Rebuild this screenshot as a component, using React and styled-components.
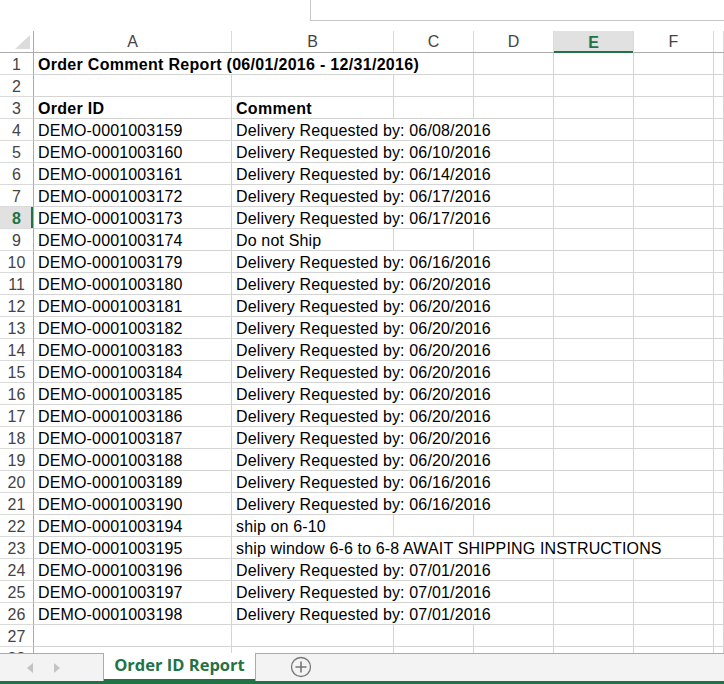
import React from 'react';
import styled, { createGlobalStyle } from 'styled-components';

const GlobalStyle = createGlobalStyle`
  html, body {
    margin: 0;
    padding: 0;
    background: #fff;
  }
  body {
    font-family: "Liberation Sans", Arial, sans-serif;
  }
`

const COLS = '34px 198px 162px 80px 80px 80px 80px 10px';

const Window = styled.div`
  width: 724px;
  height: 684px;
  display: flex;
  flex-direction: column;
  overflow: hidden;
  background: #fff;
`
const TopBar = styled.div`
  height: 31px;
  flex: none;
  display: flex;
`
const FormulaBox = styled.div`
  margin-left: 310px;
  flex: 1;
  height: 20px;
  border-left: 1px solid #c6c6c6;
  border-bottom: 1px solid #c6c6c6;
`
const HeaderRow = styled.div`
  display: grid;
  grid-template-columns: ${COLS};
  height: 22px;
  flex: none;
  border-bottom: 1px solid #ababab;
  box-sizing: border-box;
`
const Corner = styled.div`
  position: relative;
  border-right: 1px solid #ababab;
  &::after {
    content: '';
    position: absolute;
    right: 3px;
    bottom: 3px;
    width: 0;
    height: 0;
    border-left: 15px solid transparent;
    border-bottom: 14px solid #dcdcdc;
  }
`
const ColHead = styled.div`
  display: flex;
  align-items: center;
  justify-content: center;
  padding-top: 1px;
  font-size: 16px;
  color: ${p => (p.$active ? '#217346' : '#444')};
  font-weight: ${p => (p.$active ? 'bold' : 'normal')};
  background: ${p => (p.$active ? '#e1e1e1' : '#fff')};
  border-right: 1px solid #dadada;
  box-shadow: ${p => (p.$active ? 'inset 0 -2px 0 #217346' : 'none')};
  margin-bottom: ${p => (p.$active ? '-1px' : '0')};
`
const Sheet = styled.div`
  flex: 1;
  overflow: hidden;
`
const Row = styled.div`
  display: grid;
  grid-template-columns: ${COLS};
  height: 22px;
`
const RowHead = styled.div`
  display: flex;
  align-items: center;
  justify-content: center;
  padding-top: 2px;
  box-sizing: border-box;
  font-size: 16px;
  color: ${p => (p.$active ? '#217346' : '#444')};
  font-weight: ${p => (p.$active ? 'bold' : 'normal')};
  background: ${p => (p.$active ? '#e1e1e1' : '#fff')};
  border-right: 1px solid #ababab;
  border-bottom: 1px solid #dadada;
  box-shadow: ${p => (p.$active ? 'inset -2px 0 0 #217346' : 'none')};
`
const Cell = styled.div`
  grid-column: span ${p => p.$span || 1};
  display: flex;
  align-items: center;
  padding: 3px 0 0 4px;
  box-sizing: border-box;
  font-size: 16px;
  font-weight: ${p => (p.$bold ? 'bold' : 'normal')};
  letter-spacing: ${p => (p.$bold ? '0.3px' : '0.15px')};
  color: #000;
  white-space: nowrap;
  overflow: hidden;
  border-right: 1px solid #d4d4d4;
  border-bottom: 1px solid #d4d4d4;
`
const TabBar = styled.div`
  height: 31px;
  flex: none;
  display: flex;
  align-items: stretch;
  background: #f3f3f3;
  border-top: 1px solid #ababab;
  border-bottom: 3px solid #217346;
  box-sizing: border-box;
`
const NavArrows = styled.div`
  width: 103px;
  display: flex;
  align-items: center;
  padding-left: 27px;
  gap: 21px;
  box-sizing: border-box;
`
const Arrow = styled.span`
  width: 0;
  height: 0;
  border-top: 5px solid transparent;
  border-bottom: 5px solid transparent;
  ${p => (p.$dir === 'left' ? 'border-right: 6px solid #c3c3c3;' : 'border-left: 6px solid #c3c3c3;')}
`
const Tab = styled.div`
  width: 153px;
  margin-top: -1px;
  display: flex;
  align-items: center;
  justify-content: center;
  background: #fff;
  border-left: 1px solid #ababab;
  border-right: 1px solid #ababab;
  box-shadow: inset 0 -2px 0 #217346;
  box-sizing: border-box;
  font-family: "Open Sans", "Noto Sans", sans-serif;
  font-weight: bold;
  font-size: 16.5px;
  color: #217346;
  padding-bottom: 5px;
`
const AddSheet = styled.div`
  display: flex;
  align-items: center;
  padding-left: 34px;
  padding-bottom: 2px;
`

const data = [
  ['DEMO-0001003159', 'Delivery Requested by: 06/08/2016'],
  ['DEMO-0001003160', 'Delivery Requested by: 06/10/2016'],
  ['DEMO-0001003161', 'Delivery Requested by: 06/14/2016'],
  ['DEMO-0001003172', 'Delivery Requested by: 06/17/2016'],
  ['DEMO-0001003173', 'Delivery Requested by: 06/17/2016'],
  ['DEMO-0001003174', 'Do not Ship'],
  ['DEMO-0001003179', 'Delivery Requested by: 06/16/2016'],
  ['DEMO-0001003180', 'Delivery Requested by: 06/20/2016'],
  ['DEMO-0001003181', 'Delivery Requested by: 06/20/2016'],
  ['DEMO-0001003182', 'Delivery Requested by: 06/20/2016'],
  ['DEMO-0001003183', 'Delivery Requested by: 06/20/2016'],
  ['DEMO-0001003184', 'Delivery Requested by: 06/20/2016'],
  ['DEMO-0001003185', 'Delivery Requested by: 06/20/2016'],
  ['DEMO-0001003186', 'Delivery Requested by: 06/20/2016'],
  ['DEMO-0001003187', 'Delivery Requested by: 06/20/2016'],
  ['DEMO-0001003188', 'Delivery Requested by: 06/20/2016'],
  ['DEMO-0001003189', 'Delivery Requested by: 06/16/2016'],
  ['DEMO-0001003190', 'Delivery Requested by: 06/16/2016'],
  ['DEMO-0001003194', 'ship on 6-10'],
  ['DEMO-0001003195', 'ship window 6-6 to 6-8 AWAIT SHIPPING INSTRUCTIONS'],
  ['DEMO-0001003196', 'Delivery Requested by: 07/01/2016'],
  ['DEMO-0001003197', 'Delivery Requested by: 07/01/2016'],
  ['DEMO-0001003198', 'Delivery Requested by: 07/01/2016'],
];

const letters = ['A', 'B', 'C', 'D', 'E', 'F', ''];

// text spills over empty neighbours, so a long comment spans the columns it covers
function spanFor(text) {
  if (text.length > 40) return 5;
  if (text.length > 20) return 3;
  return 1;
}

function buildRows() {
  const rows = [];
  rows.push([['Order Comment Report (06/01/2016 - 12/31/2016)', 3, true], [''], [''], [''], ['']]);
  rows.push(letters.map(() => ['']));
  rows.push([['Order ID', 1, true], ['Comment', 1, true], [''], [''], [''], [''], ['']]);
  data.forEach(([id, comment]) => {
    const span = spanFor(comment);
    const rest = 6 - span;
    rows.push([[id], [comment, span], ...Array.from({ length: rest }, () => [''])]);
  });
  rows.push(letters.map(() => ['']));
  rows.push(letters.map(() => ['']));
  return rows;
}

export default function App() {
  const rows = buildRows();
  return (
    <Window>
      <GlobalStyle />
      <TopBar>
        <FormulaBox />
      </TopBar>
      <HeaderRow>
        <Corner />
        {letters.map((l, i) => (
          <ColHead key={i} $active={l === 'E'}>{l}</ColHead>
        ))}
      </HeaderRow>
      <Sheet>
        {rows.map((cells, r) => (
          <Row key={r}>
            <RowHead $active={r + 1 === 8}>{r + 1}</RowHead>
            {cells.map(([text, span, bold], c) => (
              <Cell key={c} $span={span} $bold={bold}>{text}</Cell>
            ))}
          </Row>
        ))}
      </Sheet>
      <TabBar>
        <NavArrows>
          <Arrow $dir="left" />
          <Arrow $dir="right" />
        </NavArrows>
        <Tab>Order ID Report</Tab>
        <AddSheet>
          <svg width="22" height="22" viewBox="0 0 22 22">
            <circle cx="11" cy="11" r="9.5" fill="none" stroke="#777" strokeWidth="1.3" />
            <path d="M11 5.5v11M5.5 11h11" stroke="#777" strokeWidth="1.6" />
          </svg>
        </AddSheet>
      </TabBar>
    </Window>
  );
}
